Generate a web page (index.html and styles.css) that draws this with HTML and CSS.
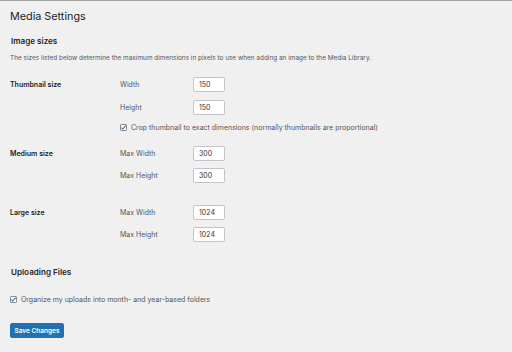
FILE: index.html
```html
<!DOCTYPE html>
<html lang="en">
<head>
  <meta charset="UTF-8" />
  <title>Media Settings</title>
  <link rel="stylesheet" href="styles.css">
</head>
<body>
  <div class="wrap">
    <h1>Media Settings</h1>

    <h2>Image sizes</h2>
    <p class="desc">The sizes listed below determine the maximum dimensions in pixels to use when adding an image to the Media Library.</p>

    <div class="size-group thumb">
      <div class="group-label">Thumbnail size</div>
      <div class="fields">
        <div class="field"><span class="field-label">Width</span><input type="text" value="150"></div>
        <div class="field"><span class="field-label">Height</span><input type="text" value="150"></div>
        <label class="check">
          <span class="box"><svg viewBox="0 0 10 10" width="7" height="7"><path d="M1.8 5.2 L4 7.3 L8.3 2.4" fill="none" stroke="#2271b1" stroke-width="1.5"/></svg></span>
          Crop thumbnail to exact dimensions (normally thumbnails are proportional)
        </label>
      </div>
    </div>

    <div class="size-group medium">
      <div class="group-label">Medium size</div>
      <div class="fields">
        <div class="field"><span class="field-label">Max Width</span><input type="text" value="300"></div>
        <div class="field"><span class="field-label">Max Height</span><input type="text" value="300"></div>
      </div>
    </div>

    <div class="size-group large">
      <div class="group-label">Large size</div>
      <div class="fields">
        <div class="field"><span class="field-label">Max Width</span><input type="text" value="1024"></div>
        <div class="field"><span class="field-label">Max Height</span><input type="text" value="1024"></div>
      </div>
    </div>

    <h2 class="uploads">Uploading Files</h2>
    <label class="check organize">
      <span class="box"><svg viewBox="0 0 10 10" width="7" height="7"><path d="M1.8 5.2 L4 7.3 L8.3 2.4" fill="none" stroke="#2271b1" stroke-width="1.5"/></svg></span>
      Organize my uploads into month- and year-based folders
    </label>

    <button class="save">Save Changes</button>
  </div>
</body>
</html>
```

FILE: styles.css
```css
body {
  margin: 0;
  background: #f0f0f1;
  border-top: 1px solid #a3a3a3;
  font-family: Inter, Roboto, "Liberation Sans", sans-serif;
  color: #1d2327;
  height: 351px;
}
.wrap {
  padding: 0 10px;
}
h1 {
  margin: 0;
  padding-top: 8px;
  font-size: 10.8px;
  line-height: 16px;
  font-weight: 400;
}
h2 {
  margin: 10px 0 0 1px;
  font-size: 8.1px;
  line-height: 12px;
  font-weight: 600;
}
.desc {
  margin: 6px 0 0;
  font-size: 6.45px;
  line-height: 10px;
  color: #555;
}
.size-group {
  display: grid;
  grid-template-columns: 110px 1fr;
}
.thumb { margin-top: 14px; }
.medium { margin-top: 12px; }
.large { margin-top: 22px; }
.group-label {
  font-size: 7px;
  font-weight: 600;
  line-height: 15px;
  color: #222;
}
.fields {
  display: flex;
  flex-direction: column;
  gap: 7px;
}
.thumb .fields { gap: 8px; }
.field {
  display: flex;
  align-items: center;
  height: 15px;
}
.field-label {
  width: 73px;
  font-size: 7px;
  color: #555;
}
.field input {
  box-sizing: border-box;
  width: 32px;
  height: 15px;
  margin: 0;
  padding: 0 0 0 5px;
  border: 1px solid #c3c4c7;
  border-radius: 2px;
  background: #fff;
  font-family: inherit;
  font-size: 7px;
  color: #333;
}
.check {
  display: flex;
  align-items: center;
  gap: 4px;
  height: 14px;
  font-size: 7px;
  color: #555;
}
.thumb .check { margin-top: -3px; }
.box {
  box-sizing: border-box;
  width: 7px;
  height: 7px;
  border: 1px solid #8c8f94;
  border-radius: 1px;
  background: #fff;
  display: flex;
  align-items: center;
  justify-content: center;
}
.box svg {
  flex: none;
}
.uploads {
  margin-top: 24px;
}
.organize {
  margin-top: 14px;
}
.save {
  display: block;
  margin-top: 17px;
  width: 54px;
  height: 15px;
  padding: 0;
  border: 1px solid #2271b1;
  border-radius: 2px;
  background: #2271b1;
  color: #fff;
  font-family: inherit;
  font-size: 6.5px;
  font-weight: 600;
}
```
